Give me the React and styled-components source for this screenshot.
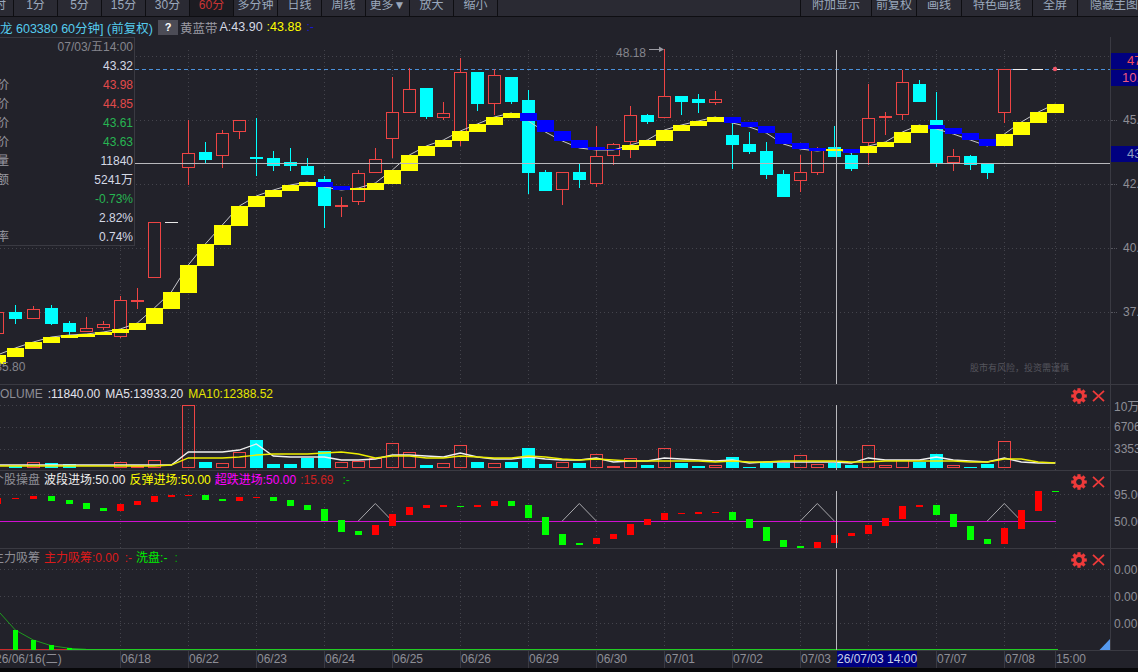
import React from "react";
import styled, { createGlobalStyle } from "styled-components";

const GlobalStyle = createGlobalStyle`
  html, body { margin: 0; padding: 0; background: #22222a; overflow: hidden; }
  * { box-sizing: border-box; }
`;

const FONT = `"Liberation Sans", "Noto Sans CJK SC", sans-serif`;
const BG = "#22222a";
const RED = "#ee4444";

// bar position, the first few bars sit 18px apart
const X = (i) => (i >= -7 ? 188.3 + 17 * i : 69.3 + 18 * (i + 7));

// [i, wick top, body top, body bottom, wick bottom, colour]
const candles = [
  [-11, 312, 312, 334, 334, "r"], [-10, 305, 312, 319, 324, "c"], [-9, 306, 309, 319, 319, "r"],
  [-8, 305, 308, 324, 325, "c"], [-7, 321, 323, 332, 336, "c"], [-6, 317, 328, 332, 332, "r"],
  [-5, 321, 324, 328, 330, "r"], [-4, 296, 300, 337, 338, "r"], [-3, 288, 300, 301, 309, "r"],
  [-2, 222, 222, 278, 278, "r"], [0, 120, 153, 168, 185, "r"], [1, 142, 152, 160, 163, "c"],
  [2, 130, 133, 156, 168, "r"], [3, 120, 120, 132, 139, "r"], [4, 118, 157, 159, 176, "c"],
  [5, 151, 158, 166, 171, "c"], [6, 148, 162, 166, 171, "c"], [7, 158, 166, 175, 175, "c"],
  [8, 176, 179, 206, 228, "c"], [9, 197, 205, 206, 217, "r"], [10, 170, 173, 202, 205, "r"],
  [11, 148, 159, 173, 173, "r"], [12, 77, 112, 139, 158, "r"], [13, 68, 89, 113, 113, "r"],
  [14, 88, 88, 117, 119, "c"], [15, 102, 113, 118, 120, "r"], [16, 58, 72, 140, 146, "r"],
  [17, 72, 72, 104, 111, "c"], [18, 69, 75, 104, 115, "r"], [19, 77, 77, 102, 104, "c"],
  [20, 90, 100, 173, 194, "c"], [21, 170, 172, 191, 191, "c"], [22, 172, 172, 190, 205, "r"],
  [23, 164, 172, 180, 188, "c"], [24, 126, 156, 184, 187, "r"], [25, 143, 144, 156, 165, "r"],
  [26, 106, 115, 142, 158, "r"], [27, 114, 115, 122, 124, "c"], [28, 49, 96, 118, 118, "r"],
  [29, 96, 96, 102, 115, "c"], [30, 94, 99, 103, 113, "c"], [31, 91, 99, 103, 105, "r"],
  [32, 123, 135, 145, 169, "c"], [33, 132, 144, 152, 154, "c"], [34, 142, 151, 175, 179, "c"],
  [35, 170, 174, 197, 197, "c"], [36, 155, 172, 181, 192, "r"], [37, 147, 148, 173, 175, "r"],
  [38, 126, 147, 157, 157, "c"], [39, 153, 155, 169, 171, "c"], [40, 84, 118, 143, 165, "r"],
  [41, 112, 116, 118, 135, "r"], [42, 70, 82, 115, 120, "r"], [43, 80, 84, 102, 102, "c"],
  [44, 92, 120, 163, 167, "c"], [45, 149, 156, 163, 171, "r"], [46, 155, 156, 165, 170, "c"],
  [47, 163, 163, 173, 179, "c"], [48, 69, 69, 113, 123, "r"],
];

// [i, top, bottom, colour]
const ribbon = [
  [-11, 355, 364, "y"], [-10, 348, 357, "y"], [-9, 342, 349, "y"], [-8, 337, 343, "y"],
  [-7, 335, 338, "y"], [-6, 334, 337, "y"], [-5, 332, 335, "y"], [-4, 329, 333, "y"],
  [-3, 323, 330, "y"], [-2, 308, 324, "y"], [-1, 292, 309, "y"], [0, 265, 293, "y"],
  [1, 244, 266, "y"], [2, 225, 245, "y"], [3, 206, 226, "y"], [4, 196, 207, "y"],
  [5, 190, 197, "y"], [6, 185, 191, "y"], [7, 182, 186, "y"], [8, 182, 187, "b"],
  [9, 186, 190, "b"], [10, 188, 190, "y"], [11, 183, 190, "y"], [12, 170, 184, "y"],
  [13, 155, 171, "y"], [14, 146, 156, "y"], [15, 140, 147, "y"], [16, 131, 141, "y"],
  [17, 124, 132, "y"], [18, 117, 125, "y"], [19, 113, 118, "y"], [20, 113, 121, "b"],
  [21, 120, 132, "b"], [22, 131, 141, "b"], [23, 140, 148, "b"], [24, 147, 150, "b"],
  [25, 149, 150, "b"], [26, 145, 150, "y"], [27, 140, 146, "y"], [28, 130, 141, "y"],
  [29, 125, 131, "y"], [30, 121, 126, "y"], [31, 117, 122, "y"], [32, 117, 123, "b"],
  [33, 122, 127, "b"], [34, 126, 133, "b"], [35, 133, 144, "b"], [36, 143, 149, "b"],
  [37, 148, 151, "b"], [38, 149, 151, "y"], [39, 149, 153, "b"], [40, 146, 153, "y"],
  [41, 142, 147, "y"], [42, 132, 143, "y"], [43, 125, 133, "y"], [44, 125, 129, "b"],
  [45, 128, 134, "b"], [46, 133, 140, "b"], [47, 139, 146, "b"], [48, 134, 146, "y"],
  [49, 122, 135, "y"], [50, 112, 123, "y"], [51, 104, 113, "y"],
];

// [i, top, colour], r = hollow, f = filled red, c = cyan
const volumes = [
  [-10, 466, "c"], [-9, 462, "r"], [-8, 463, "c"], [-7, 464, "c"], [-6, 467, "r"], [-5, 467, "r"],
  [-4, 462, "r"], [-3, 466, "f"], [-2, 460, "r"], [-1, 467, "r"], [0, 405, "r"], [1, 462, "c"],
  [2, 463, "r"], [3, 452, "r"], [4, 440, "c"], [5, 464, "c"], [6, 464, "c"], [7, 458, "c"],
  [8, 451, "c"], [9, 462, "r"], [10, 461, "r"], [11, 458, "r"], [12, 443, "r"], [13, 452, "r"],
  [14, 465, "c"], [15, 463, "r"], [16, 445, "r"], [17, 462, "c"], [18, 463, "r"], [19, 462, "c"],
  [20, 448, "c"], [21, 464, "c"], [22, 462, "r"], [23, 463, "c"], [24, 454, "r"], [25, 466, "f"],
  [26, 458, "r"], [27, 465, "c"], [28, 448, "r"], [29, 463, "c"], [30, 466, "c"], [31, 465, "r"],
  [32, 457, "c"], [33, 467, "c"], [34, 463, "c"], [35, 463, "c"], [36, 455, "r"], [37, 464, "r"],
  [38, 463, "c"], [39, 465, "c"], [40, 445, "r"], [41, 465, "r"], [42, 460, "r"], [43, 462, "c"],
  [44, 454, "c"], [45, 465, "r"], [46, 467, "c"], [47, 464, "c"], [48, 441, "r"], [49, 467, "r"],
  [50, 467, "r"], [51, 467, "r"],
];

const ma5 = [
  465, 465, 465, 465, 465, 465, 465, 465, 465, 465, 465, 452, 452, 452, 450, 444, 456, 457, 457, 457,
  460, 460, 459, 455, 455, 456, 457, 453, 457, 459, 459, 457, 459, 460, 460, 458, 462, 461, 461, 458,
  459, 460, 461, 460, 463, 462, 462, 462, 462, 462, 463, 458, 460, 460, 460, 457, 460, 461, 462, 458,
  462, 463, 463,
];
const ma10 = [
  466, 466, 466, 466, 466, 466, 466, 466, 466, 466, 465, 458, 458, 458, 457, 455, 454, 454, 454, 453,
  452, 454, 458, 456, 456, 458, 458, 456, 457, 458, 458, 456, 457, 459, 460, 459, 460, 461, 461, 461,
  461, 461, 462, 461, 462, 462, 461, 461, 461, 461, 462, 462, 461, 461, 461, 461, 461, 462, 462, 459,
  459, 462, 463,
];

// [i, top, bottom, colour]
const swings = [
  [-11, 498, 504, "r"], [-10, 498, 499, "r"], [-9, 496, 499, "r"], [-8, 496, 501, "g"], [-7, 500, 504, "g"],
  [-6, 503, 509, "g"], [-5, 508, 511, "g"], [-4, 504, 511, "r"], [-3, 501, 505, "r"], [-2, 496, 502, "r"],
  [-1, 495, 497, "r"], [0, 495, 496, "r"], [1, 495, 500, "g"], [2, 499, 501, "g"], [3, 497, 501, "r"],
  [4, 497, 498, "r"], [5, 497, 501, "g"], [6, 500, 506, "g"], [7, 505, 510, "g"], [8, 509, 521, "g"],
  [9, 520, 532, "g"], [10, 531, 535, "g"], [11, 525, 535, "r"], [12, 514, 526, "r"], [13, 507, 515, "r"],
  [14, 505, 508, "r"], [15, 505, 507, "r"], [16, 506, 507, "g"], [17, 505, 507, "r"], [18, 501, 506, "r"],
  [19, 501, 506, "g"], [20, 505, 518, "g"], [21, 517, 535, "g"], [22, 534, 545, "g"], [23, 543, 545, "g"],
  [24, 538, 544, "r"], [25, 534, 539, "r"], [26, 524, 535, "r"], [27, 519, 525, "r"], [28, 513, 520, "r"],
  [29, 513, 514, "r"], [30, 512, 514, "r"], [31, 512, 513, "r"], [32, 512, 520, "g"], [33, 519, 528, "g"],
  [34, 527, 541, "g"], [35, 540, 547, "g"], [36, 546, 548, "g"], [37, 542, 548, "r"], [38, 535, 543, "r"],
  [39, 533, 536, "r"], [40, 525, 534, "r"], [41, 518, 526, "r"], [42, 506, 519, "r"], [43, 505, 507, "r"],
  [44, 505, 515, "g"], [45, 514, 527, "g"], [46, 526, 540, "g"], [47, 539, 544, "g"], [48, 528, 544, "r"],
  [49, 510, 529, "r"], [50, 491, 511, "r"], [51, 491, 492, "g"],
];

const peaks = [11, 23, 37, 48];
const suction = [[-10, 630], [-9, 640], [-8, 645], [-7, 648]];
const gridXs = [-4, 0, 4, 8, 12, 16, 20, 24, 28, 32, 36, 40, 44, 48, 51].map(X);

const Page = styled.div`
  display: flex;
  flex-direction: column;
  width: 1138px;
  height: 672px;
  overflow: hidden;
  background: ${BG};
  font: 12px ${FONT};
`;

const Toolbar = styled.div`
  display: flex;
  height: 17px;
  flex: none;
  background: #2a2a33;
  border-bottom: 1px solid #0e0e12;
`;

const ToolButton = styled.div`
  width: ${(p) => p.$w}px;
  flex: none;
  height: 16px;
  line-height: 11px;
  font-size: 12px;
  text-align: center;
  white-space: nowrap;
  color: ${(p) => (p.$active ? "#c83434" : "#9aa8bc")};
  background: ${(p) => (p.$active ? "#1c1c22" : "transparent")};
  border-right: 1px solid #0e0e12;
`;

const ToolEdge = styled(ToolButton)`
  padding-right: 7px;
  direction: rtl;
`;

const ToolLast = styled(ToolButton)`
  padding-left: 12px;
  text-align: left;
  border-right: none;
`;

const ToolSpacer = styled.div`
  flex: 1;
  border-right: 1px solid #0e0e12;
`;

const InfoBar = styled.div`
  display: flex;
  align-items: center;
  gap: 2px;
  height: 20px;
  flex: none;
  white-space: nowrap;
  font-size: 12.5px;
`;

const InfoTitle = styled.span`
  color: #55ccee;
  width: 156px;
  flex: none;
`;

const HelpMark = styled.span`
  width: 20px;
  height: 15px;
  line-height: 15px;
  text-align: center;
  background: #4c4c56;
  color: #fff;
  font-weight: bold;
  font-size: 11px;
`;

const InfoText = styled.span`
  margin-left: ${(p) => p.$ml || 0}px;
  color: ${(p) => p.$c};
`;

const Row = styled.div`
  display: flex;
  height: ${(p) => p.$h}px;
  flex: none;
  border-bottom: 1px solid #3a3a42;
`;

const Plot = styled.div`
  position: relative;
  display: flex;
  flex-direction: column;
  width: 1110px;
  flex: none;
`;

const PanelHead = styled.div`
  display: flex;
  height: 20px;
  flex: none;
  padding-right: 5px;
`;

const Legend = styled.div`
  display: flex;
  gap: ${(p) => p.$gap}px;
  height: 18px;
  line-height: 18px;
  margin-left: ${(p) => p.$shift}px;
  white-space: nowrap;
`;

const LegendItem = styled.span`
  margin-left: ${(p) => p.$ml || 0}px;
  color: ${(p) => p.$c};
`;

const PanelTools = styled.div`
  display: flex;
  align-items: center;
  gap: 5px;
  margin-left: auto;
  padding-top: 2px;
`;

const Chart = styled.svg`
  display: block;
  flex: none;
`;

const ChartText = styled.text`
  font: ${(p) => p.$size}px ${FONT};
  fill: ${(p) => p.$c};
`;

const AxisColumn = styled.div`
  position: relative;
  flex: 1;
  display: flex;
  flex-direction: column;
  overflow: hidden;
  padding-top: ${(p) => p.$top}px;
  border-left: 1px solid #3a3a42;
`;

const AxisLabel = styled.div`
  position: relative;
  display: flex;
  align-items: center;
  height: ${(p) => p.$h}px;
  flex: none;
  padding-left: ${(p) => p.$pad}px;
  color: #8e8e96;
  white-space: nowrap;
  &::before {
    content: "";
    display: ${(p) => (p.$tick ? "block" : "none")};
    position: absolute;
    left: 0;
    top: 50%;
    width: 6px;
    border-top: 1px dotted #55555d;
  }
`;

const PriceTag = styled.div`
  position: absolute;
  left: 0;
  right: 0;
  top: ${(p) => p.$top}px;
  height: 16px;
  line-height: 16px;
  padding-left: ${(p) => p.$pad}px;
  background: #000080;
  color: ${(p) => p.$c};
  font-size: 13px;
  white-space: nowrap;
`;

const DataBox = styled.div`
  position: absolute;
  left: 0;
  top: 0;
  width: 135px;
  height: 209px;
  background: ${BG};
  border-top: 1px solid #3a3a42;
  border-right: 1px solid #3a3a42;
  border-bottom: 1px solid #3a3a42;
`;

const DataRow = styled.div`
  display: flex;
  justify-content: space-between;
  height: 19px;
  line-height: 18px;
  padding-right: 1px;
  white-space: nowrap;
`;

const DataLabel = styled.span`
  margin-left: -27px;
  color: #9a9aa2;
`;

const DataValue = styled.span`
  color: ${(p) => p.$c};
`;

const TimeAxis = styled.div`
  position: relative;
  display: flex;
  height: 17px;
  flex: none;
  line-height: 17px;
  color: #8e8e96;
  white-space: nowrap;
`;

const TimeCell = styled.div`
  width: ${(p) => p.$w}px;
  flex: none;
  border-left: 1px solid #3a3a42;
`;

const TimeFirst = styled.div`
  flex: 0 0 125px;
  margin-left: -5px;
`;

const DateTag = styled.div`
  position: absolute;
  left: 837px;
  top: 0;
  width: 80px;
  height: 16px;
  line-height: 16px;
  background: #000080;
  color: #c8d0e8;
`;

const Footer = styled.div`
  height: 4px;
  flex: none;
  background: #08080a;
`;

const Grid = ({ ys, top, bottom }) => (
  <g stroke="#44444c" strokeDasharray="1 3" shapeRendering="crispEdges">
    {ys.map((y) => (
      <line key={y} x1="0" x2="1110" y1={y + 0.5} y2={y + 0.5} />
    ))}
    {gridXs.map((x) => (
      <line key={x} x1={Math.floor(x) + 0.5} x2={Math.floor(x) + 0.5} y1={top} y2={bottom} />
    ))}
  </g>
);

const CrossV = ({ top, bottom }) => (
  <rect x="836" y={top} width="1" height={bottom - top} fill="#b8b8bc" shapeRendering="crispEdges" />
);

const Candle = ({ d }) => {
  const [i, wt, t, b, wb, kind] = d;
  const x = Math.floor(X(i));
  const left = Math.round(X(i) - 6.5);
  const color = kind === "r" ? RED : "#00ffff";
  return (
    <g shapeRendering="crispEdges">
      <rect x={x} y={wt} width="1" height={wb - wt} fill={color} />
      {kind === "r" ? (
        <rect x={left + 0.5} y={t + 0.5} width="12" height={Math.max(b - t - 1, 0.5)} fill={BG} stroke={color} />
      ) : (
        <rect x={left} y={t} width="13" height={b - t} fill={color} />
      )}
    </g>
  );
};

const gearTeeth = [0, 45, 90, 135, 180, 225, 270, 315];

const PanelIcons = () => (
  <PanelTools>
    <svg width="16" height="16" viewBox="0 0 16 16">
      <circle cx="8" cy="8" r="4.4" fill="none" stroke="#ee3a3a" strokeWidth="3" />
      {gearTeeth.map((a) => (
        <rect key={a} x="6.4" y="0.2" width="3.2" height="3" fill="#ee3a3a" transform={`rotate(${a} 8 8)`} />
      ))}
    </svg>
    <svg width="13" height="12" viewBox="0 0 13 12">
      <path d="M1 0.8 L12 11.2 M12 0.8 L1 11.2" stroke="#ee3a3a" strokeWidth="1.8" fill="none" />
    </svg>
  </PanelTools>
);

const toolLeft = ["1分", "5分", "15分", "30分", "60分", "多分钟", "日线", "周线", "更多▼", "放大", "缩小"];
const toolRight = [["附加显示", 71], ["前复权", 45], ["画线", 45], ["特色画线", 71], ["全屏", 45]];

const dataRows = [
  ["", "07/03/五14:00", "#85858d"],
  ["", "43.32", "#d4d8e4"],
  ["开盘价", "43.98", "#e24a4a"],
  ["最高价", "44.85", "#e24a4a"],
  ["最低价", "43.61", "#27b552"],
  ["平均价", "43.63", "#27b552"],
  ["成交量", "11840", "#d4d8e4"],
  ["成交额", "5241万", "#d4d8e4"],
  ["", "-0.73%", "#27b552"],
  ["", "2.82%", "#d4d8e4"],
  ["换手率", "0.74%", "#d4d8e4"],
];

const timeCells = ["06/22", "06/23", "06/24", "06/25", "06/26", "06/29", "06/30", "07/01", "07/02", "07/03", "", "07/07"];

const App = () => {
  const ribbonLine = ribbon.map(([i, t, b, k]) => `${X(i)},${k === "y" ? t : b}`).join(" ");
  const maPoints = (list) => list.map((y, n) => `${X(n - 11)},${y}`).join(" ");
  return (
    <Page>
      <GlobalStyle />
      <Toolbar>
        <ToolEdge $w={14}>时</ToolEdge>
        {toolLeft.map((t) => (
          <ToolButton key={t} $w={44} $active={t === "60分"}>
            {t}
          </ToolButton>
        ))}
        <ToolSpacer />
        {toolRight.map(([t, w]) => (
          <ToolButton key={t} $w={w}>
            {t}
          </ToolButton>
        ))}
        <ToolLast $w={60}>隐藏主图</ToolLast>
      </Toolbar>

      <InfoBar>
        <InfoTitle>龙 603380 60分钟] (前复权)</InfoTitle>
        <HelpMark>?</HelpMark>
        <InfoText $c="#9a9aa2">黄蓝带</InfoText>
        <InfoText $c="#d4d8e4">A:43.90</InfoText>
        <InfoText $c="#ffff00" $ml={2}>:43.88</InfoText>
        <InfoText $c="#1a1ad0" $ml={3}>:-</InfoText>
      </InfoBar>

      <Row $h={348}>
        <Plot>
          <Chart width="1110" height="347" viewBox="0 37 1110 347">
            <Grid ys={[56, 120, 184, 248, 312]} top={50} bottom={384} />
            <line x1="135" x2="1110" y1="69.5" y2="69.5" stroke="#4a90d9" strokeDasharray="4 3" />
            {candles.map((d) => (
              <Candle key={d[0]} d={d} />
            ))}
            <rect x="165" y="222" width="13" height="1" fill="#e8e8e8" />
            <polyline points={ribbonLine} fill="none" stroke="#c8c8cc" />
            <g shapeRendering="crispEdges">
              {ribbon.map(([i, t, b, k]) => (
                <rect key={i} x={Math.round(X(i) - 8.5)} y={t} width="17" height={b - t} fill={k === "y" ? "#ffff00" : "#0000ff"} />
              ))}
              <rect x="1013" y="69" width="14" height="1" fill="#eeeeee" />
              <rect x="1032" y="69" width="11" height="1" fill="#eeeeee" />
              <rect x="1057" y="69" width="3" height="1" fill="#eeeeee" />
              <rect x="135" y="163" width="975" height="1" fill="#b8b8bc" />
              <rect x="649" y="49" width="14" height="1" fill="#9a9aa2" />
            </g>
            <path d="M659 46.5 L664 49.5 L659 52 Z" fill="#9a9aa2" />
            <circle cx="1055" cy="69" r="2.2" fill="#ee5566" />
            <CrossV top={50} bottom={384} />
            <ChartText x="616" y="57" $size={12} $c="#85858d">48.18</ChartText>
            <ChartText x="-4.7" y="371" $size={12} $c="#85858d">35.80</ChartText>
            <ChartText x="970" y="371" $size={9} $c="#55555d">股市有风险，投资需谨慎</ChartText>
          </Chart>
          <DataBox>
            {dataRows.map(([k, v, c]) => (
              <DataRow key={v}>
                <DataLabel>{k}</DataLabel>
                <DataValue $c={c}>{v}</DataValue>
              </DataRow>
            ))}
          </DataBox>
        </Plot>
        <AxisColumn $top={51}>
          <PriceTag $top={16} $pad={16} $c="#ee4a5a">47.32</PriceTag>
          <PriceTag $top={33} $pad={11} $c="#ee5a80">10.2%</PriceTag>
          <PriceTag $top={109} $pad={16} $c="#8c9ac0">43.32</PriceTag>
          {["45.00", "42.00", "40.00", "37.00"].map((v) => (
            <AxisLabel key={v} $h={64} $pad={12} $tick>
              {v}
            </AxisLabel>
          ))}
        </AxisColumn>
      </Row>

      <Row $h={86}>
        <Plot>
          <PanelHead>
            <Legend $gap={5} $shift={-8}>
              <LegendItem $c="#8e8e96">VOLUME</LegendItem>
              <LegendItem $c="#e4e4ec">:11840.00</LegendItem>
              <LegendItem $c="#e4e4ec">MA5:13933.20</LegendItem>
              <LegendItem $c="#e6e600">MA10:12388.52</LegendItem>
            </Legend>
            <PanelIcons />
          </PanelHead>
          <Chart width="1110" height="65" viewBox="0 405 1110 65">
            <Grid ys={[405, 427, 449]} top={405} bottom={470} />
            <g shapeRendering="crispEdges">
              {volumes.map(([i, top, k]) =>
                k === "c" ? (
                  <rect key={i} x={Math.round(X(i) - 6.5)} y={top} width="13" height={468 - top} fill="#00ffff" />
                ) : k === "f" ? (
                  <rect key={i} x={Math.round(X(i) - 6.5)} y={top} width="13" height={468 - top} fill={RED} />
                ) : (
                  <rect key={i} x={Math.round(X(i) - 6.5) + 0.5} y={top + 0.5} width="12" height={467 - top} fill="none" stroke={RED} />
                )
              )}
            </g>
            <polyline points={maPoints(ma5)} fill="none" stroke="#f0f0f0" strokeWidth="1.3" />
            <polyline points={maPoints(ma10)} fill="none" stroke="#eeee00" strokeWidth="1.3" />
            <CrossV top={405} bottom={470} />
          </Chart>
        </Plot>
        <AxisColumn $top={9}>
          <AxisLabel $h={22} $pad={3}>10万</AxisLabel>
          <AxisLabel $h={22} $pad={3}>6706</AxisLabel>
          <AxisLabel $h={22} $pad={3}>3353</AxisLabel>
        </AxisColumn>
      </Row>

      <Row $h={78}>
        <Plot>
          <PanelHead>
            <Legend $gap={4} $shift={-8}>
              <LegendItem $c="#8e8e96">个股操盘</LegendItem>
              <LegendItem $c="#eeeeee">波段进场:50.00</LegendItem>
              <LegendItem $c="#ffff00">反弹进场:50.00</LegendItem>
              <LegendItem $c="#ff00ff">超跌进场:50.00</LegendItem>
              <LegendItem $c="#cc2020">:15.69</LegendItem>
              <LegendItem $c="#00cc00" $ml={5}>:-</LegendItem>
            </Legend>
            <PanelIcons />
          </PanelHead>
          <Chart width="1110" height="57" viewBox="0 491 1110 57">
            <Grid ys={[494]} top={491} bottom={548} />
            <rect x="0" y="521" width="1056" height="1" fill="#d010d0" />
            {peaks.map((i) => (
              <polyline key={i} points={`${X(i - 1)},521 ${X(i)},503.5 ${X(i + 1)},521`} fill="none" stroke="#a8a8ac" />
            ))}
            <g shapeRendering="crispEdges">
              {swings.map(([i, t, b, k]) => (
                <rect key={i} x={Math.round(X(i) - 3.5)} y={t} width="7" height={b - t} fill={k === "r" ? "#ff0000" : "#00ff00"} />
              ))}
            </g>
            <CrossV top={491} bottom={548} />
          </Chart>
        </Plot>
        <AxisColumn $top={10}>
          <AxisLabel $h={27} $pad={3}>95.00</AxisLabel>
          <AxisLabel $h={27} $pad={3}>50.00</AxisLabel>
        </AxisColumn>
      </Row>

      <Row $h={102}>
        <Plot>
          <PanelHead>
            <Legend $gap={4} $shift={-8}>
              <LegendItem $c="#8e8e96">主力吸筹</LegendItem>
              <LegendItem $c="#dd1a1a">主力吸筹:0.00</LegendItem>
              <LegendItem $c="#dd1a1a" $ml={2}>:-</LegendItem>
              <LegendItem $c="#00ee00">洗盘:-</LegendItem>
              <LegendItem $c="#00aa00" $ml={3}>:</LegendItem>
            </Legend>
            <PanelIcons />
          </PanelHead>
          <Chart width="1110" height="81" viewBox="0 569 1110 81">
            <Grid ys={[569, 596, 623]} top={569} bottom={650} />
            <polyline points="0,613 15.3,630 33.3,640 51.3,645.7 69.3,648.3 86,649.3" fill="none" stroke="#1f9a1f" />
            <g shapeRendering="crispEdges">
              <rect x="0" y="649" width="72" height="1" fill="#cc2a2a" />
              <rect x="72" y="649" width="986" height="1" fill="#22cc22" />
              {suction.map(([i, t]) => (
                <rect key={i} x={Math.round(X(i) - 2.5)} y={t} width="5" height={650 - t} fill="#00ff00" />
              ))}
            </g>
            <path d="M1099.5 650 L1110 639 L1110 650 Z" fill="#5599ee" />
            <CrossV top={569} bottom={650} />
          </Chart>
        </Plot>
        <AxisColumn $top={7}>
          <AxisLabel $h={27} $pad={3}>0.00</AxisLabel>
          <AxisLabel $h={27} $pad={3}>0.00</AxisLabel>
          <AxisLabel $h={27} $pad={3}>0.00</AxisLabel>
        </AxisColumn>
      </Row>

      <TimeAxis>
        <TimeFirst>26/06/16(二)</TimeFirst>
        <TimeCell $w={68}>06/18</TimeCell>
        {timeCells.map((t, n) => (
          <TimeCell key={n} $w={68}>
            {t}
          </TimeCell>
        ))}
        <TimeCell $w={51}>07/08</TimeCell>
        <TimeCell $w={60}>15:00</TimeCell>
        <DateTag>26/07/03 14:00</DateTag>
      </TimeAxis>
      <Footer />
    </Page>
  );
};

export default App;
